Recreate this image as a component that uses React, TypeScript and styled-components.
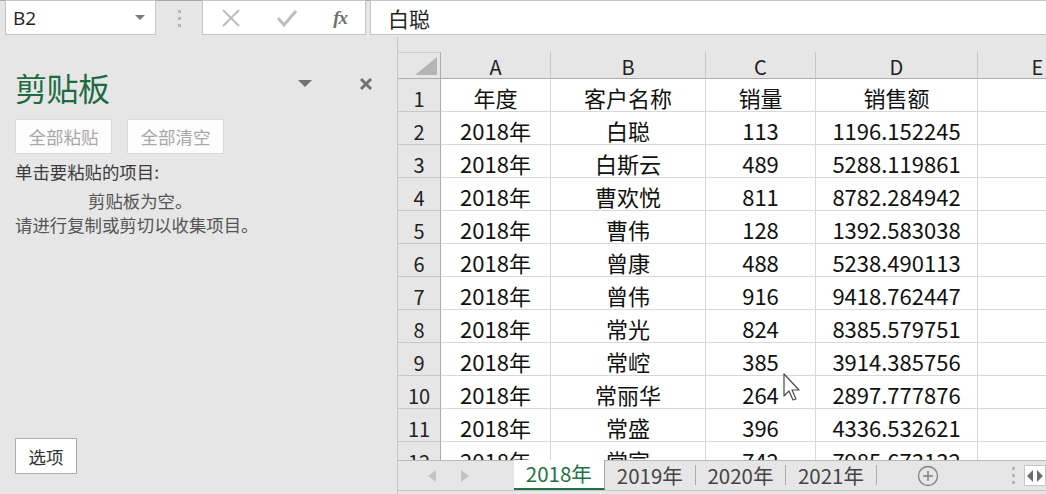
import React from 'react'
import styled, { createGlobalStyle } from 'styled-components'

const GlobalStyle = createGlobalStyle`
  html, body {
    margin: 0;
    padding: 0;
    background: #e6e6e6;
  }
  * {
    box-sizing: border-box;
  }
`

const CJK = `"Noto Sans CJK SC", "Noto Sans", sans-serif`

const rows: string[][] = [
  ['年度', '客户名称', '销量', '销售额', ''],
  ['2018年', '白聪', '113', '1196.152245', ''],
  ['2018年', '白斯云', '489', '5288.119861', ''],
  ['2018年', '曹欢悦', '811', '8782.284942', ''],
  ['2018年', '曹伟', '128', '1392.583038', ''],
  ['2018年', '曾康', '488', '5238.490113', ''],
  ['2018年', '曾伟', '916', '9418.762447', ''],
  ['2018年', '常光', '824', '8385.579751', ''],
  ['2018年', '常崆', '385', '3914.385756', ''],
  ['2018年', '常丽华', '264', '2897.777876', ''],
  ['2018年', '常盛', '396', '4336.532621', ''],
  ['2018年', '常宣', '742', '7985.673132', ''],
]

const cols = ['A', 'B', 'C', 'D', 'E']
const sheets = ['2018年', '2019年', '2020年', '2021年']

const App: React.FC = () => {
  return (
    <>
      <GlobalStyle />
      <Window>
        <FormulaRow>
          <NameBox>
            <NameText>B2</NameText>
            <svg width="10" height="6" viewBox="0 0 10 6">
              <path d="M0 0 L10 0 L5 5 Z" fill="#7a7a7a" />
            </svg>
          </NameBox>
          <Grip>
            <i /><i /><i />
          </Grip>
          <IconBox>
            <svg width="20" height="20" viewBox="0 0 20 20">
              <path d="M2 2 L18 18 M18 2 L2 18" stroke="#bdbdbd" strokeWidth="2" />
            </svg>
            <svg width="22" height="20" viewBox="0 0 22 20">
              <path d="M2 10 L8 17 L20 3" stroke="#bdbdbd" strokeWidth="3" fill="none" />
            </svg>
            <Fx>fx</Fx>
          </IconBox>
          <FormulaInput>白聪</FormulaInput>
        </FormulaRow>

        <Body>
          <Pane>
            <PaneHead>
              <PaneTitle>剪贴板</PaneTitle>
              <PaneTools>
                <svg width="14" height="8" viewBox="0 0 14 8">
                  <path d="M0 0 L14 0 L7 7 Z" fill="#6e7370" />
                </svg>
                <svg width="14" height="14" viewBox="0 0 14 14">
                  <path d="M2 2 L12 12 M12 2 L2 12" stroke="#6e7370" strokeWidth="3" />
                </svg>
              </PaneTools>
            </PaneHead>
            <PaneButtons>
              <GhostButton>全部粘贴</GhostButton>
              <GhostButton>全部清空</GhostButton>
            </PaneButtons>
            <PaneLabel>单击要粘贴的项目:</PaneLabel>
            <EmptyNote>
              <EmptyTitle>剪贴板为空。</EmptyTitle>
              <span>请进行复制或剪切以收集项目。</span>
            </EmptyNote>
            <PaneFoot>
              <OptionButton>选项</OptionButton>
            </PaneFoot>
          </Pane>

          <SheetArea>
            <Grid>
              <Corner>
                <svg width="22" height="18" viewBox="0 0 22 18">
                  <path d="M22 0 L22 18 L0 18 Z" fill="#b5b5b5" />
                </svg>
              </Corner>
              {cols.map(c => (
                <ColHead key={c}>{c}</ColHead>
              ))}
              {rows.map((r, i) => (
                <React.Fragment key={i}>
                  <RowHead>{i + 1}</RowHead>
                  {r.map((v, j) => (
                    <Cell key={j}>{v}</Cell>
                  ))}
                </React.Fragment>
              ))}
            </Grid>
            <TabBar>
              <TabNav>
                <svg width="8" height="12" viewBox="0 0 8 12">
                  <path d="M8 0 L8 12 L0 6 Z" fill="#c4c4c4" />
                </svg>
                <svg width="8" height="12" viewBox="0 0 8 12">
                  <path d="M0 0 L0 12 L8 6 Z" fill="#c4c4c4" />
                </svg>
              </TabNav>
              {sheets.map((s, i) => (
                <Tab key={s} active={i === 0}>{s}</Tab>
              ))}
              <AddSheet>
                <svg width="22" height="22" viewBox="0 0 22 22">
                  <circle cx="11" cy="11" r="9.5" stroke="#808080" strokeWidth="1.3" fill="none" />
                  <path d="M11 6 L11 16 M6 11 L16 11" stroke="#808080" strokeWidth="1.5" />
                </svg>
              </AddSheet>
              <TabGrip>
                <i /><i /><i />
              </TabGrip>
              <ScrollArrows>
                <svg width="6" height="12" viewBox="0 0 6 12">
                  <path d="M6 0 L6 12 L0 6 Z" fill="#6e6e6e" />
                </svg>
                <svg width="6" height="12" viewBox="0 0 6 12">
                  <path d="M0 0 L0 12 L6 6 Z" fill="#6e6e6e" />
                </svg>
              </ScrollArrows>
            </TabBar>
            <Cursor>
              <svg width="22" height="30" viewBox="0 0 22 30">
                <path
                  d="M1 1 L1 23 L6 18 L10 27 L13 26 L9 17 L16 17 Z"
                  fill="#ffffff"
                  stroke="#4a4a4a"
                  strokeWidth="1.2"
                  strokeLinejoin="round"
                />
              </svg>
            </Cursor>
          </SheetArea>
        </Body>
      </Window>
    </>
  )
}

export default App

const Window = styled.div`
    width: 1046px;
    height: 494px;
    background: #e6e6e6;
    display: flex;
    flex-direction: column;
    overflow: hidden;
    font-family: ${CJK};
`

const FormulaRow = styled.div`
    height: 37px;
    display: flex;
    align-items: flex-start;
    border-top: 1px solid #a8a8a8;
    flex-shrink: 0;
`

const NameBox = styled.div`
    margin-left: 5px;
    width: 151px;
    height: 35px;
    margin-top: -1px;
    background: #fff;
    border: 1px solid #c6c6c6;
    display: flex;
    align-items: center;
    justify-content: space-between;
    padding: 0 10px 0 7px;
`

const NameText = styled.span`
    font-family: "Open Sans", "Noto Sans", sans-serif;
    font-size: 19px;
    color: #222;
`

const Grip = styled.div`
    width: 46px;
    height: 35px;
    display: flex;
    flex-direction: column;
    align-items: center;
    justify-content: center;
    gap: 4px;
    > i {
        width: 3px;
        height: 3px;
        background: #b4b4b4;
        display: block;
    }
`

const IconBox = styled.div`
    width: 164px;
    height: 35px;
    margin-top: -1px;
    background: #fff;
    border: 1px solid #c6c6c6;
    display: flex;
    align-items: center;
    justify-content: space-between;
    padding: 0 18px 0 18px;
`

const Fx = styled.span`
    font-family: "Liberation Serif", "DejaVu Serif", serif;
    font-style: italic;
    font-weight: bold;
    font-size: 19px;
    color: #707070;
    letter-spacing: -1px;
`

const FormulaInput = styled.div`
    flex: 1;
    margin-left: 4px;
    height: 35px;
    margin-top: -1px;
    background: #fff;
    border: 1px solid #c6c6c6;
    border-right: none;
    display: flex;
    align-items: center;
    padding-left: 17px;
    font-size: 21px;
    color: #222;
`

const Body = styled.div`
    flex: 1;
    display: flex;
    min-height: 0;
`

const Pane = styled.div`
    width: 397px;
    display: flex;
    flex-direction: column;
    padding: 0 0 0 15px;
    color: #444;
`

const PaneHead = styled.div`
    display: flex;
    align-items: center;
    justify-content: space-between;
    margin-top: 27px;
    height: 46px;
`

const PaneTitle = styled.div`
    font-size: 32px;
    color: #1d6b41;
    line-height: 46px;
    letter-spacing: -0.5px;
`

const PaneTools = styled.div`
    display: flex;
    align-items: center;
    gap: 47px;
    padding-right: 24px;
    margin-top: -6px;
`

const PaneButtons = styled.div`
    display: flex;
    gap: 15px;
    margin-top: 9px;
`

const GhostButton = styled.div`
    width: 97px;
    height: 35px;
    background: #fcfcfc;
    border: 1px solid #dadada;
    display: flex;
    align-items: center;
    justify-content: center;
    font-size: 17.5px;
    color: #a8a8a8;
`

const PaneLabel = styled.div`
    margin-top: 6px;
    font-size: 17.4px;
    line-height: 24px;
    color: #3c3c3c;
`

const EmptyNote = styled.div`
    display: flex;
    flex-direction: column;
    font-size: 17.4px;
    line-height: 24px;
    color: #555;
    margin-top: 5px;
    width: 244px;
`

const EmptyTitle = styled.span`
    align-self: flex-start;
    margin-left: 73px;
`

const PaneFoot = styled.div`
    margin-top: auto;
    padding-bottom: 20px;
`

const OptionButton = styled.div`
    width: 62px;
    height: 36px;
    background: #fff;
    border: 1px solid #acacac;
    display: flex;
    align-items: center;
    justify-content: center;
    font-size: 17.5px;
    color: #333;
`

const SheetArea = styled.div`
    position: relative;
    flex: 1;
    display: flex;
    flex-direction: column;
    border-left: 1px solid #c8c8c8;
    padding-top: 15px;
    min-width: 0;
`

const Grid = styled.div`
    display: grid;
    grid-template-columns: 43px 110px 155px 110px 162px 120px;
    grid-template-rows: 27px;
    grid-auto-rows: 33px;
    height: 408px;
    overflow: hidden;
    background: #fff;
    flex-shrink: 0;
    font-family: "Noto Sans CJK SC", "Noto Sans", sans-serif;
`

const Corner = styled.div`
    background: #e6e6e6;
    border-right: 1px solid #ababab;
    border-bottom: 1px solid #ababab;
    border-top: 1px solid #d0d0d0;
    display: flex;
    align-items: flex-end;
    justify-content: flex-end;
    padding: 0 3px 3px 0;
`

const ColHead = styled.div`
    background: #e6e6e6;
    border-right: 1px solid #c8c8c8;
    border-bottom: 1px solid #ababab;
    display: flex;
    align-items: center;
    justify-content: center;
    font-size: 20px;
    color: #222;
    padding-top: 2px;
`

const RowHead = styled.div`
    background: #e6e6e6;
    border-right: 1px solid #ababab;
    border-bottom: 1px solid #c8c8c8;
    display: flex;
    align-items: center;
    justify-content: center;
    font-size: 20px;
    color: #222;
    padding-top: 6px;
`

const Cell = styled.div`
    border-right: 1px solid #d8d8d8;
    border-bottom: 1px solid #d8d8d8;
    display: flex;
    align-items: center;
    justify-content: center;
    font-size: 22px;
    color: #111;
    padding-top: 3px;
    white-space: nowrap;
`

const TabBar = styled.div`
    height: 31px;
    display: flex;
    align-items: stretch;
    border-top: 1px solid #b8b8b8;
    border-bottom: 1px solid #c6c6c6;
    background: #e6e6e6;
    flex-shrink: 0;
`

const TabNav = styled.div`
    width: 116px;
    display: flex;
    align-items: center;
    gap: 25px;
    padding-left: 30px;
`

const Tab = styled.div<{ active?: boolean }>`
    width: ${props => (props.active ? '92px' : '91px')};
    margin-top: -1px;
    display: flex;
    align-items: center;
    justify-content: center;
    font-size: 20.5px;
    color: ${props => (props.active ? '#217346' : '#444')};
    background: ${props => (props.active ? '#fff' : 'transparent')};
    border-bottom: ${props => (props.active ? '2px solid #217346' : 'none')};
    border-right: 1px solid #acacac;
    ${props => (props.active ? 'padding-bottom: 2px;' : 'margin-bottom: 5px; margin-top: 4px;')}
`

const AddSheet = styled.div`
    width: 100px;
    display: flex;
    align-items: center;
    justify-content: center;
    padding-left: 3px;
`

const TabGrip = styled.div`
    width: 48px;
    display: flex;
    flex-direction: column;
    align-items: center;
    justify-content: center;
    gap: 4px;
    padding-left: 26px;
    > i {
        display: block;
        width: 3px;
        height: 3px;
        background: #b4b4b4;
    }
`

const ScrollArrows = styled.div`
    margin-left: auto;
    width: 22px;
    display: flex;
    align-items: center;
    justify-content: space-around;
    background: #fff;
    border: 1px solid #c6c6c6;
    margin-top: 4px;
    margin-bottom: 4px;
`

const Cursor = styled.div`
    position: absolute;
    left: 385px;
    top: 336px;
    line-height: 0;
    pointer-events: none;
`
